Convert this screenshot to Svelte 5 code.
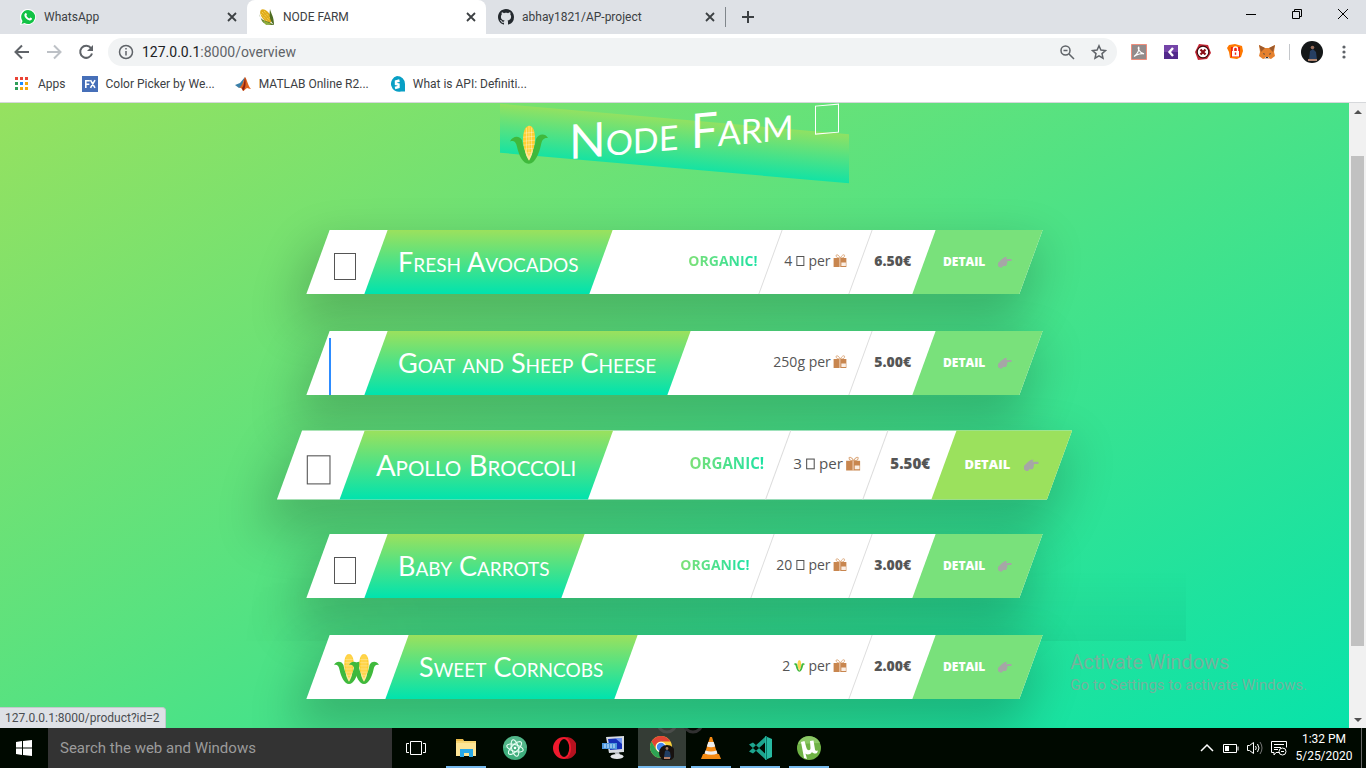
<script>
  const products = [
    { id: 0, name: 'Fresh Avocados', picture: 'box', organic: true, qty: '4', unit: 'box', price: '6.50€' },
    { id: 1, name: 'Goat and Sheep Cheese', picture: 'bar', organic: false, qty: '250g', unit: '', price: '5.00€' },
    { id: 2, name: 'Apollo Broccoli', picture: 'box', organic: true, qty: '3', unit: 'box', price: '5.50€' },
    { id: 3, name: 'Baby Carrots', picture: 'box', organic: true, qty: '20', unit: 'box', price: '3.00€' },
    { id: 4, name: 'Sweet Corncobs', picture: 'corn', organic: false, qty: '2', unit: 'corn', price: '2.00€' }
  ];
  const hovered = 2;
  const tabs = [
    { title: 'WhatsApp', icon: 'whatsapp' },
    { title: 'NODE FARM', icon: 'corn', active: true },
    { title: 'abhay1821/AP-project', icon: 'github' }
  ];
  const bookmarks = [
    { title: 'Apps', icon: 'apps' },
    { title: 'Color Picker by We...', icon: 'fx' },
    { title: 'MATLAB Online R2...', icon: 'matlab' },
    { title: 'What is API: Definiti...', icon: 'api' }
  ];
  const extensions = ['pdf', 'chevron', 'blocker', 'lock', 'fox'];
  const apps = [
    { id: 'explorer', open: true },
    { id: 'atom' },
    { id: 'opera' },
    { id: 'remote' },
    { id: 'chrome', open: true, active: true },
    { id: 'vlc', open: true },
    { id: 'code', open: true },
    { id: 'torrent', open: true }
  ];
</script>

{#snippet corn()}
  <svg class="corn" viewBox="0 0 38 40" aria-hidden="true">
    <path d="M19 1c4 0 6 6 6 13s-2 17-6 22c-4-5-6-15-6-22S15 1 19 1z" fill="#ffce31" />
    <path d="M14 8h10M13 12h12M13 16h12M13 20h12M14 24h10M15 28h8M16.500 3v30M21.500 3v30M19 1v34" stroke="#fff" stroke-opacity=".4" stroke-width=".8" />
    <path d="M0 15c3-6 10-5 12 0 1 6 3 13 7 20 4-7 6-14 7-20 2-5 9-6 12 0-4-1-6 1-7 6-2 9-6 18-12 18S9 30 7 21C6 16 4 14 0 15z" fill="#3fb93c" />
    <path d="M15 24c0 5 2 9 4 12 2-3 4-7 4-12l-4 8z" fill="#ffe79a" />
  </svg>
{/snippet}

{#snippet gift()}
  <svg class="gift" viewBox="0 0 14 14" aria-hidden="true">
    <path d="M7 4C5 0 2 0 3 2.500 3.500 4 5 4 7 4c2 0 3.500 0 4-1.500C12 0 9 0 7 4z" fill="none" stroke="#dba87c" />
    <path d="M0 4h13v9H0z" fill="#c8864f" />
    <path d="M6 4h1v9H6z" fill="#efd3bc" />
    <path d="M8 8.500h4.500V12H8z" fill="#fbeee4" />
  </svg>
{/snippet}

{#snippet close()}
  <svg width="10" height="10" viewBox="0 0 10 10"><path d="M1 1l8 8M9 1L1 9" stroke="#3c4043" stroke-width="1.800" /></svg>
{/snippet}

{#snippet icon(name)}
  <svg width="16" height="16" viewBox="0 0 16 16" aria-hidden="true">
    {#if name === 'whatsapp'}
      <path d="M8 0a8 8 0 1 1-3.700 15.100L0 16l1-4A8 8 0 0 1 8 0z" fill="#fff" />
      <path d="M8 1a7 7 0 1 1-3.500 13L1.500 15l1-3A7 7 0 0 1 8 1z" fill="#11c245" />
      <path d="M5.300 4.300c.7-.6 1-.2 1.600 1.200.2.500-.6.900-.5 1.200.5 1.200 1.500 2.200 2.900 2.700.4.100.8-.9 1.200-.8 1.300.6 1.600.8 1.500 1.200-.3 1.300-1.500 1.900-3 1.400C6.500 10.400 4.700 8.300 4.400 6.500c-.1-.8.300-1.700.9-2.200z" fill="#fff" />
    {:else if name === 'corn'}
      <ellipse cx="7" cy="7" rx="4.200" ry="7.800" transform="rotate(-38 7 7)" fill="#e0ab1a" />
      <path d="M3 3l8 9M5 2l8 9M2 5l7 8" stroke="#fbe06c" stroke-width="1" stroke-dasharray="1 1" />
      <path d="M0 5c1 5 5 7 10 8l5 3c-6 0-10-1-12-4zM11 0c1 5 4 7 4 16-4-4-5-8-4-16z" fill="#4f6d22" />
      <path d="M3 11l4 5 6-1z" fill="#8fae3c" />
    {:else if name === 'github'}
      <path fill="#24292e" d="M8 0C3.580 0 0 3.580 0 8c0 3.540 2.290 6.530 5.470 7.590.4.070.55-.17.55-.38 0-.19-.01-.82-.01-1.490-2.010.37-2.530-.49-2.690-.94-.09-.23-.48-.94-.82-1.130-.28-.15-.68-.52-.01-.53.63-.01 1.080.58 1.230.82.72 1.210 1.870.87 2.330.66.07-.52.28-.87.510-1.070-1.780-.2-3.640-.89-3.640-3.950 0-.87.310-1.590.82-2.150-.08-.2-.36-1.020.08-2.120 0 0 .67-.21 2.200.82.64-.18 1.320-.27 2-.27s1.360.09 2 .27c1.530-1.040 2.200-.82 2.200-.82.44 1.100.16 1.920.08 2.120.51.56.82 1.270.82 2.150 0 3.070-1.870 3.750-3.650 3.950.29.25.54.73.54 1.480 0 1.070-.01 1.930-.01 2.200 0 .21.15.46.55.38A8 8 0 0 0 16 8c0-4.420-3.580-8-8-8z" />
    {:else if name === 'apps'}
      <path d="M1 1h3v3H1zM6 1h3v3H6zM11 1h3v3h-3z" fill="#ea4335" />
      <path d="M1 6h3v3H1zM1 11h3v3H1z" fill="#2f9e58" />
      <path d="M6 6h3v3H6z" fill="#1a8cff" />
      <path d="M11 6h3v3h-3zM6 11h3v3H6zM11 11h3v3h-3z" fill="#f5a80b" />
    {:else if name === 'fx'}
      <path d="M0 0h16v16H0z" fill="#466fb8" />
      <path d="M3.800 12V4.700h4M3.800 8.200h3.500M8.500 4.200l4.500 7.600M13 4.200l-4.500 7.600" fill="none" stroke="#fff" stroke-width="1.600" />
    {:else if name === 'matlab'}
      <path d="M0 9l5-2 5-6-3 10-3 1z" fill="#3b7fa8" />
      <path d="M4 12c3-2 4-6 6-11 2 2 3 9 6 12-2 0-3-1-4-1-2 1-3 3-4 3-1-2-2-4-4-3z" fill="#e0641f" />
      <path d="M10 1c-1 5-1 9-3 11 0 1 1 2 1 3 3-3 3-9 2-14z" fill="#8e2413" />
    {:else if name === 'api'}
      <path d="M8 0a8 8 0 0 1 8 8v7.500h-4A8 8 0 1 1 8 0z" fill="#089fc5" />
      <path d="M10.500 4.500L7 5.500V8l2.500.5V11L6 12" fill="none" stroke="#fff" stroke-width="2.400" />
    {:else if name === 'pdf'}
      <path d="M.5.5h15v15H.5z" fill="#938b8b" stroke="#ef8d7b" />
      <path d="M3 12.500c3-2 6-7 4.800-9.300-1.500.3.200 5.500 5.200 6.600-2-.8-7 .5-10 2.700z" fill="none" stroke="#fff" stroke-width="1.200" />
    {:else if name === 'chevron'}
      <path d="M1 1h14v14H1z" fill="#7444a8" /><path d="M1 8h14v7H1z" fill="#53298c" />
      <path d="M10 4L6.500 8l3.500 4" fill="none" stroke="#fff" stroke-width="2.400" />
    {:else if name === 'blocker'}
      <path d="M4 0l9 1 3 8-4 6-9 1-3-8z" fill="#c72836" />
      <circle cx="8" cy="8" r="5.800" fill="#fff" stroke="#3a0c10" stroke-width="1.200" />
      <path d="M5.500 5.500l5 5M10.500 5.500l-5 5" stroke="#8a0d16" stroke-width="2.200" />
    {:else if name === 'lock'}
      <path d="M0 4l2-3 6-1 7 2 1 5-2 6-4 2-7-1-1-6z" fill="#ff7800" /><path d="M4 3h9v10H4z" fill="#ee2512" />
      <path d="M5 7h7v5.500H5z" fill="#fff" /><path d="M6.500 7V5a2 2 0 0 1 4 0v2" fill="none" stroke="#fff" stroke-width="1.400" /><path d="M7.800 8.500h1.400v2.300H7.800z" fill="#e22" />
    {:else if name === 'fox'}
      <path d="M0 1l6 3h4l6-3-1 7 1 4-4 3-3-1H7l-3 1-4-3 1-4z" fill="#e5812e" />
      <path d="M0 1l6 3-4 4zM16 1l-6 3 4 4z" fill="#9c5a2d" /><path d="M6 13h4v2H6z" fill="#d6c5b5" />
      <path d="M4 9l2 1-1 .8zM12 9l-2 1 1 .8zM7 13h2v1H7z" fill="#233447" />
    {/if}
  </svg>
{/snippet}

{#snippet appIcon(name)}
  <svg width="24" height="24" viewBox="0 0 24 24" aria-hidden="true">
    {#if name === 'explorer'}
      <path d="M2 3h7l1 2h12v15H2z" fill="#f7d673" /><path d="M2 7h20v13H2z" fill="#fde596" />
      <path d="M6 13h13v8h-4v-4h-5v4H6z" fill="#29a9e8" /><path d="M2 3h7v2H2z" fill="#e9b94a" />
    {:else if name === 'atom'}
      <circle cx="12" cy="12" r="12" fill="#3fae7d" /><path d="M12 0a12 12 0 0 1 12 12H0A12 12 0 0 1 12 0z" fill="#5fba91" opacity=".6" />
      <g fill="none" stroke="#e9fff5" stroke-width="1.100"><ellipse cx="12" cy="12" rx="3.400" ry="8.500" transform="rotate(-14 12 12)" /><ellipse cx="12" cy="12" rx="3.400" ry="8.500" transform="rotate(46 12 12)" /><ellipse cx="12" cy="12" rx="3.400" ry="8.500" transform="rotate(106 12 12)" /></g>
      <circle cx="12" cy="12" r="1.300" fill="#fff" />
    {:else if name === 'opera'}
      <circle cx="12" cy="12" r="11" fill="#f01a2e" /><path d="M14 1a11 11 0 0 1 0 22c4-3 5-7 5-11s-1-8-5-11z" fill="#b5121f" /><ellipse cx="12" cy="12" rx="5.200" ry="9" fill="#000900" />
    {:else if name === 'remote'}
      <path d="M5 1l18-1v16L8 17z" fill="#d7dbe0" /><path d="M7 3l14-1v11L9 14z" fill="#1530b8" /><path d="M14 2l7 0v6z" fill="#6f96ef" />
      <path d="M1 7h15v6H1z" fill="#4c95db" /><path d="M3 9h11M3 11h11" stroke="#d4ecff" stroke-dasharray="2 1" />
      <path d="M13 16h5l1 3h-4z" fill="#b9bdc2" /><ellipse cx="16" cy="20.500" rx="6.500" ry="2.500" fill="#e3e5e8" />
    {:else if name === 'chrome'}
      <circle cx="11" cy="11" r="11" fill="#f9cf3a" /><path d="M1.500 5.500A11 11 0 0 1 20.500 5.500H11a5.500 5.500 0 0 0-5 8z" fill="#e24435" /><path d="M1.500 5.500A11 11 0 0 0 10 22l4.500-7A5.500 5.500 0 0 1 6 13.500z" fill="#2ea254" />
      <circle cx="11" cy="11" r="5.200" fill="#fff" /><circle cx="11" cy="11" r="4.200" fill="#4487ee" />
      <circle cx="17" cy="17" r="8" fill="#17120f" /><path d="M14 21l1-6 2-1 3 2 1 6z" fill="#213e63" /><circle cx="17" cy="12.500" r="1.400" fill="#a37860" /><path d="M14 21h6v2h-6z" fill="#b48069" />
    {:else if name === 'vlc'}
      <path d="M4 18h16l2 5H2z" fill="#f28a12" /><path d="M11 1h2l6 19q-7 3-14 0z" fill="#f58a12" /><path d="M9.300 6h5.400l1.500 4.500q-4 1.500-8.400 0zM6.500 14.500q5.500 2 11 0l1 3q-6 2.500-13 0z" fill="#eee" />
    {:else if name === 'code'}
      <path d="M17 0l7 3v18l-7 3z" fill="#27b9a1" /><path d="M17 6.500L5 17.500l-4-2L17 1zM17 17.500L5 6.500l-4 2L17 23z" fill="#1da58e" /><path d="M18 0h1v24h-1z" fill="#087966" />
    {:else if name === 'torrent'}
      <circle cx="12" cy="12" r="12" fill="#6fb245" /><path d="M1 8A12 12 0 0 1 23 7z" fill="#8bc866" />
      <path d="M4 6l3.500-1 2 7c1 3 4 3 4 0L13 5l3.500-.5 1.500 9c.3 1.500 1.500 1.500 3 1l-1 2.500c-2 1-4 .5-5-1-2 3-5 3-6.500 1.500L10 23l-3-1z" fill="#fff" />
    {/if}
  </svg>
{/snippet}

<div class="desktop">
  <header class="tabs">
    {#each tabs as tab}
      <div class="tab" class:active={tab.active}>
        {@render icon(tab.icon)}
        <span>{tab.title}</span>
        <button aria-label="Close tab">{@render close()}</button>
      </div>
    {/each}
    <i class="divider"></i>
    <button class="new" aria-label="New tab"><svg width="12" height="12" viewBox="0 0 12 12"><path d="M6 0v12M0 6h12" stroke="#3c4043" stroke-width="2" /></svg></button>
    <div class="window">
      <button aria-label="Minimize"><svg width="12" height="12"><path d="M1 6.500h10" stroke="#000" /></svg></button>
      <button aria-label="Restore"><svg width="12" height="12" fill="none" stroke="#000"><path d="M1.500 3.500h7v7h-7zM3.500 3.500v-2h7v7h-2" /></svg></button>
      <button aria-label="Close"><svg width="12" height="12"><path d="M1 1l10 10M11 1L1 11" stroke="#000" /></svg></button>
    </div>
  </header>

  <nav class="toolbar">
    <button aria-label="Back"><svg width="16" height="16" fill="none" stroke="#5f6368" stroke-width="2"><path d="M15 8H2M8 1.500L1.500 8 8 14.500" /></svg></button>
    <button aria-label="Forward"><svg width="16" height="16" fill="none" stroke="#bdc1c6" stroke-width="2"><path d="M1 8h13M8 1.500L14.500 8 8 14.500" /></svg></button>
    <button aria-label="Reload"><svg width="16" height="16" fill="none"><path d="M13 4.200A6 6 0 1 0 14 9.500" stroke="#5f6368" stroke-width="2" /><path d="M15 1v6H9z" fill="#5f6368" /></svg></button>
    <div class="omnibox">
      <svg width="16" height="16" fill="none" stroke="#5f6368" stroke-width="1.500"><circle cx="8" cy="8" r="6.500" /><path d="M8 7v4.500M8 4v1.500" /></svg>
      <span class="url"><b>127.0.0.1</b>:8000/overview</span>
      <svg width="16" height="16" fill="none" stroke="#5f6368" stroke-width="1.500"><circle cx="6.500" cy="6.500" r="4.500" /><path d="M10 10l5 5M4.500 6.500h4" /></svg>
      <svg width="16" height="16" fill="none" stroke="#5f6368" stroke-width="1.500"><path d="M8 1.800l1.900 4.300 4.600.4-3.500 3.100 1 4.600L8 11.800l-4 2.400 1-4.600-3.500-3.100 4.600-.4z" /></svg>
    </div>
    <div class="extensions">
      {#each extensions as name}{@render icon(name)}{/each}
    </div>
    <i class="rule"></i>
    <svg class="avatar" width="22" height="22" viewBox="0 0 22 22"><circle cx="11" cy="11" r="11" fill="#141718" /><path d="M8 19l1-9 3-2 3 3 1 8z" fill="#263f63" /><circle cx="11.500" cy="6.500" r="1.800" fill="#9a6f5c" /><path d="M7 18h9v2H7z" fill="#b08671" /></svg>
    <button aria-label="Menu"><svg width="4" height="14" fill="#5f6368"><circle cx="2" cy="2" r="1.600" /><circle cx="2" cy="7" r="1.600" /><circle cx="2" cy="12" r="1.600" /></svg></button>
  </nav>

  <nav class="bookmarks">
    {#each bookmarks as mark}
      <a href="#{mark.icon}">{@render icon(mark.icon)}{mark.title}</a>
    {/each}
  </nav>

  <div class="viewport">
    <main>
      <div class="hero">
        <h1>
          {@render corn()}
          <span>Node Farm</span>
          <i class="glyph"></i>
        </h1>
      </div>
      <div class="cards">
        {#each products as p}
          <figure class="card" class:hovered={p.id === hovered}>
            <div class="picture" class:stretch={p.picture === 'bar'} class:pair={p.picture === 'corn'}>
              {#if p.picture === 'corn'}
                {@render corn()}{@render corn()}
              {:else}
                <i class={p.picture === 'bar' ? 'bar' : 'glyph'}></i>
              {/if}
            </div>
            <div class="title"><h2>{p.name}</h2></div>
            <div class="details">
              {#if p.organic}<div class="cell"><strong class="organic">Organic!</strong></div>{/if}
              <div class="cell">
                <span class="qty">
                  {p.qty}
                  {#if p.unit === 'box'}<i class="glyph"></i>{:else if p.unit === 'corn'}{@render corn()}{/if}
                  per {@render gift()}
                </span>
              </div>
              <div class="cell"><strong class="price">{p.price}</strong></div>
            </div>
            <a class="link" href="#product-{p.id}">
              <span>Detail
                <svg width="14" height="11" viewBox="0 0 14 11"><path d="M0 6l4-4 3-2h2L8 2h5.500v2H9.500l-.5 3-1 2H5l-1 1.500H2L0 9z" fill="#a6a6a6" /></svg>
              </span>
            </a>
          </figure>
        {/each}
      </div>
      <i class="trail"></i>
      <div class="watermark"><p>Activate Windows</p><p>Go to Settings to activate Windows.</p></div>
      <div class="status">127.0.0.1:8000/product?id=2</div>
    </main>
    <div class="scrollbar">
      <svg width="17" height="17"><path d="M5 11l4-4 4 4z" fill="#505050" /></svg>
      <i class="before"></i><i class="thumb"></i><i class="after"></i>
      <svg width="17" height="17"><path d="M5 7l4 4 4-4z" fill="#505050" /></svg>
    </div>
  </div>

  <footer>
    <button class="start" aria-label="Start"><svg width="16" height="16" fill="#fff"><path d="M0 2l6-1v6.500H0zM7 1l9-1v7.500H7zM0 8.500h6V15l-6-1zM7 8.500h9V16l-9-1z" /></svg></button>
    <input type="text" aria-label="Search the web and Windows" placeholder="Search the web and Windows" />
    <button class="view" aria-label="Task view"><svg width="20" height="14" fill="none" stroke="#fff"><path d="M4.500.5h11v13h-11zM3 2.500H.5v9H3M17 2.500h2.500v9H17" /></svg></button>
    <div class="apps">
      {#each apps as app}
        <button class:open={app.open} class:active={app.active} aria-label={app.id}>{@render appIcon(app.id)}</button>
      {/each}
    </div>
    <svg class="rings" width="52" height="6" fill="none" stroke="#4a4d4a" stroke-width="3"><circle cx="11" cy="-5" r="9" /><circle cx="37" cy="-5" r="9" stroke="#303030" /></svg>
    <div class="tray">
      <svg width="16" height="16" fill="none" stroke="#fff" stroke-width="1.500"><path d="M2 11l6-6 6 6" /></svg>
      <svg width="16" height="16" fill="none" stroke="#fff"><path d="M.5 4.500h13v8H.5zM15 6.500v4" /><path d="M2 6h4v5H2z" fill="#fff" stroke="none" /></svg>
      <svg width="16" height="16" fill="none" stroke="#fff"><path d="M.5 5.500h2l4-3v11l-4-3h-2zM8.500 6q1.500 2 0 4M10.500 4q3 4 0 8" /><path d="M13 2q4 6 0 12" stroke="#777" /></svg>
      <svg width="16" height="16" fill="none" stroke="#fff"><path d="M8 12.500H5L3 15v-2.500H.5V1.500h15v6M3 4.500h10M3 7.500h7M3 9.500h4" /><circle cx="11.500" cy="11.500" r="3.500" /><path d="M10 11.500h3" /></svg>
    </div>
    <time><span>1:32 PM</span><span>5/25/2020</span></time>
    <i class="edge"></i>
  </footer>
</div>

<style>
  :global(body) { margin: 0; }
  .desktop { display: flex; flex-direction: column; height: 100vh; min-height: 740px; overflow: hidden; font: 12px/16px Roboto, "Open Sans", sans-serif; color: #3c4043; background: #fff; }
  button { display: flex; align-items: center; justify-content: center; padding: 0; border: 0; background: none; }
  svg { flex: none; display: block; }
  i { display: block; }

  .tabs { display: flex; align-items: center; height: 34px; background: #dee1e6; }
  .tab { display: flex; align-items: center; gap: 8px; box-sizing: border-box; width: 239px; height: 34px; padding: 0 10px 0 12px; }
  .tab:first-child { width: 247px; padding-left: 20px; }
  .tab span { flex: 1; white-space: nowrap; }
  .tab.active { background: #fff; border-radius: 8px 8px 0 0; }
  .divider { width: 1px; height: 20px; background: #80868b; }
  .new { width: 44px; height: 28px; }
  .window { display: flex; margin-left: auto; margin-bottom: 6px; }
  .window button { width: 46px; height: 28px; }

  .toolbar { display: flex; align-items: center; height: 36px; padding: 0 8px 0 6px; }
  .toolbar button { width: 32px; height: 28px; }
  .toolbar > button:last-child { width: 28px; margin-left: 7px; }
  .omnibox { flex: 1; display: flex; align-items: center; gap: 16px; height: 28px; margin-left: 6px; padding: 0 10px; border-radius: 14px; background: #f1f3f4; }
  .url { flex: 1; margin-left: -8px; font-size: 14px; line-height: 20px; color: #5f6368; }
  .url b { font-weight: 400; color: #202124; }
  .extensions { display: flex; gap: 16px; margin-left: 14px; }
  .rule { width: 1px; height: 16px; margin: 0 11px 0 14px; background: #c4c7cb; }

  .bookmarks { display: flex; align-items: center; gap: 20px; height: 28px; padding: 0 14px 4px; border-bottom: 1px solid #d6d8db; }
  .bookmarks a { display: flex; align-items: center; gap: 8px; color: #3c4043; text-decoration: none; white-space: nowrap; }
  .bookmarks a:first-child { margin-right: -4px; }

  .viewport { flex: 1; display: flex; min-height: 0; }
  main { position: relative; z-index: 0; flex: 1; color: #555; background: linear-gradient(to bottom right, #9be15d, #00e3ae) 0 -50px / 100% 754px; }
  .hero { position: relative; display: flex; justify-content: center; box-sizing: border-box; height: 127px; padding-top: 9px; }
  .hero::before { content: ""; position: absolute; top: 16px; left: 50%; width: 349px; height: 49px; margin-left: -175px; background: linear-gradient(#9be15d, #00e3ae); opacity: .8; transform: skewY(5deg); }
  h1 { position: relative; display: flex; align-items: center; gap: 21px; height: 40px; margin: 0; font: 400 48px/40px Lato, sans-serif; font-variant-caps: small-caps; color: #fff; transform: skewY(-5deg); }
  h1 .corn { width: 38px; height: 40px; }
  .glyph { box-sizing: border-box; border: 1px solid currentColor; }
  h1 .glyph { width: 24px; height: 29px; }

  .cards { display: flex; flex-direction: column; justify-content: space-between; height: 469px; max-width: 713px; margin: 0 auto; }
  .card { display: flex; height: 64px; margin: 0; background: #fff; box-shadow: 0 22px 45px 8px rgba(0, 0, 0, .2); transform: skewX(-20deg); }
  .card.hovered { transform: skewX(-20deg) scale(1.08); }
  .picture { display: flex; align-items: center; box-sizing: border-box; min-width: 58px; padding: 8px 18px 0 16px; transform: skewX(20deg); }
  .picture .glyph { width: 22px; height: 27px; }
  .picture.stretch { align-items: stretch; padding: 7px 0 0 11px; }
  .bar { width: 2px; background: #2d8cff; }
  .picture.pair { padding-top: 4px; }
  .picture .corn { width: 30px; height: 36px; }
  .picture .corn + .corn { margin-left: -15px; }
  .title { display: flex; align-items: center; padding: 0 23px 0 22px; background: linear-gradient(#9be15d, #00e3ae); }
  h2 { margin: 0; font: 400 27px/32px Lato, sans-serif; font-variant-caps: small-caps; color: #fff; white-space: nowrap; transform: skewX(20deg); }
  .details { flex: 1; display: flex; justify-content: flex-end; font: 14px/20px "Open Sans", sans-serif; }
  .cell { display: flex; align-items: center; padding: 0 13px 2px; white-space: nowrap; }
  .cell + .cell { border-left: 1px solid #ddd; }
  .cell > * { transform: skewX(20deg); }
  .organic { text-transform: uppercase; background: linear-gradient(to right, #7ee077, #1de2a3); background-clip: text; color: transparent; }
  .qty { display: flex; align-items: center; gap: 3px; }
  .qty .glyph { width: 8px; height: 10px; margin: 0 1px; }
  .qty .corn { width: 12px; height: 12px; }
  .gift { width: 14px; height: 14px; }
  .price { font-weight: 800; }
  .link { display: flex; align-items: center; justify-content: center; width: 107px; font: 800 12px/16px "Open Sans", sans-serif; color: #fff; text-transform: uppercase; text-decoration: none; background: #79e17b; }
  .link span { display: flex; align-items: center; gap: 13px; transform: skewX(20deg); }
  .hovered .link { background: #9be15d; }

  .trail { position: absolute; z-index: -1; top: 468px; left: 240px; right: 163px; height: 70px; background: linear-gradient(transparent, rgba(0, 70, 50, .06)); mask-image: linear-gradient(to right, transparent, #000 20%); }
  .watermark { position: absolute; right: 42px; bottom: 33px; color: rgba(150, 160, 155, .75); font-size: 15px; line-height: 20px; }
  .watermark p { margin: 0; }
  .watermark p:first-child { font-size: 20px; line-height: 26px; }
  .status { position: absolute; left: 0; bottom: 0; padding: 2px 5px; border: 1px solid #c3c8cc; border-width: 1px 1px 0 0; border-radius: 0 4px 0 0; color: #4a4d51; background: #dee1e6; }
  .scrollbar { display: flex; flex-direction: column; width: 17px; background: #f1f1f1; }
  .before { flex: 36; }
  .thumb { flex: 490; margin: 0 2px; background: #c1c1c1; }
  .after { flex: 65; }

  footer { position: relative; z-index: 1; display: flex; height: 40px; color: #fff; background: #000900; }
  .start, .view { width: 48px; }
  footer input { box-sizing: border-box; width: 344px; padding: 0 12px; border: 0; border-radius: 0; font: 15px/20px Roboto, sans-serif; color: #fff; background: #333; }
  footer input::placeholder { color: #9b9b9b; opacity: 1; }
  .apps { display: flex; gap: 1px; margin-left: 2px; }
  .apps button { position: relative; width: 48px; }
  .apps .active { background: #343c35; }
  .apps .open::after { content: ""; position: absolute; left: 4px; right: 4px; bottom: 0; height: 2px; background: #76b9ed; }
  .apps .active::after { left: 0; right: 0; }
  .rings { position: absolute; left: 656px; top: 0; }
  .tray { display: flex; align-items: center; gap: 8px; margin-left: auto; }
  time { display: flex; flex-direction: column; align-items: center; justify-content: center; width: 74px; line-height: 17px; }
  .edge { width: 1px; margin-right: 4px; background: #666; }
</style>
